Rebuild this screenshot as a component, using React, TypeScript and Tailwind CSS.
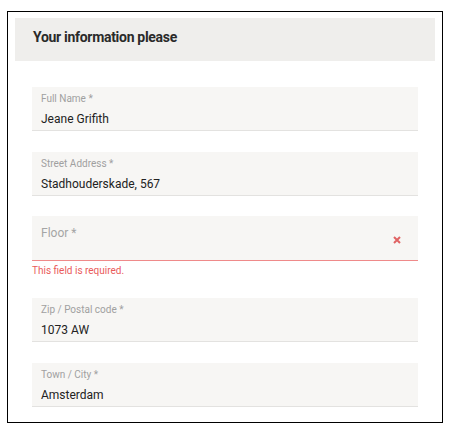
import React from "react";

function Field({ label, value }: { label: string; value: string }) {
  return (
    <div className="h-[44px] bg-[#f7f6f4] border-b border-b-[#e3e2e0] px-[9px] pt-[6px]">
      <div className="text-[10px] leading-[12px] text-[#a0a0a0]">{label}</div>
      <div className="text-[12px] leading-[16px] mt-[6px] text-[#222]">{value}</div>
    </div>
  );
}

export default function App() {
  return (
    <div className="w-[452px] h-[437px] bg-white pt-[11px] pl-[7px]" style={{ fontFamily: "Roboto, 'Liberation Sans', sans-serif" }}>
      <div className="w-[436px] h-[412px] border border-black pt-[6px] px-[7px]">
        <div className="h-[43px] bg-[#efeeec] pl-[18px] pt-[11px]">
          <div className="text-[14px] leading-[17px] font-bold tracking-[-0.3px] text-[#2a2a2a]">Your information please</div>
        </div>
        <div className="px-[17px] pt-[26px] flex flex-col">
          <Field label="Full Name *" value="Jeane Grifith" />
          <div className="h-[21px] shrink-0" />
          <Field label="Street Address *" value="Stadhouderskade, 567" />
          <div className="h-[20px] shrink-0" />
          <div className="h-[45px] bg-[#f7f6f4] border-b border-b-[#ef8a8a] px-[9px] pt-[9px] flex justify-between">
            <div className="text-[12px] leading-[16px] text-[#a5a5a5]">Floor *</div>
            <svg width="8" height="8" viewBox="0 0 8 8" className="mt-[11px] mr-[8px]">
              <path d="M1 1 L7 7 M7 1 L1 7" stroke="#e06363" strokeWidth="2" strokeLinecap="butt" />
            </svg>
          </div>
          <div className="text-[10px] leading-[12px] text-[#ea5b5b] mt-[4px]">This field is required.</div>
          <div className="h-[21px] shrink-0" />
          <Field label="Zip / Postal code *" value="1073 AW" />
          <div className="h-[21px] shrink-0" />
          <Field label="Town / City *" value="Amsterdam" />
        </div>
      </div>
    </div>
  );
}
